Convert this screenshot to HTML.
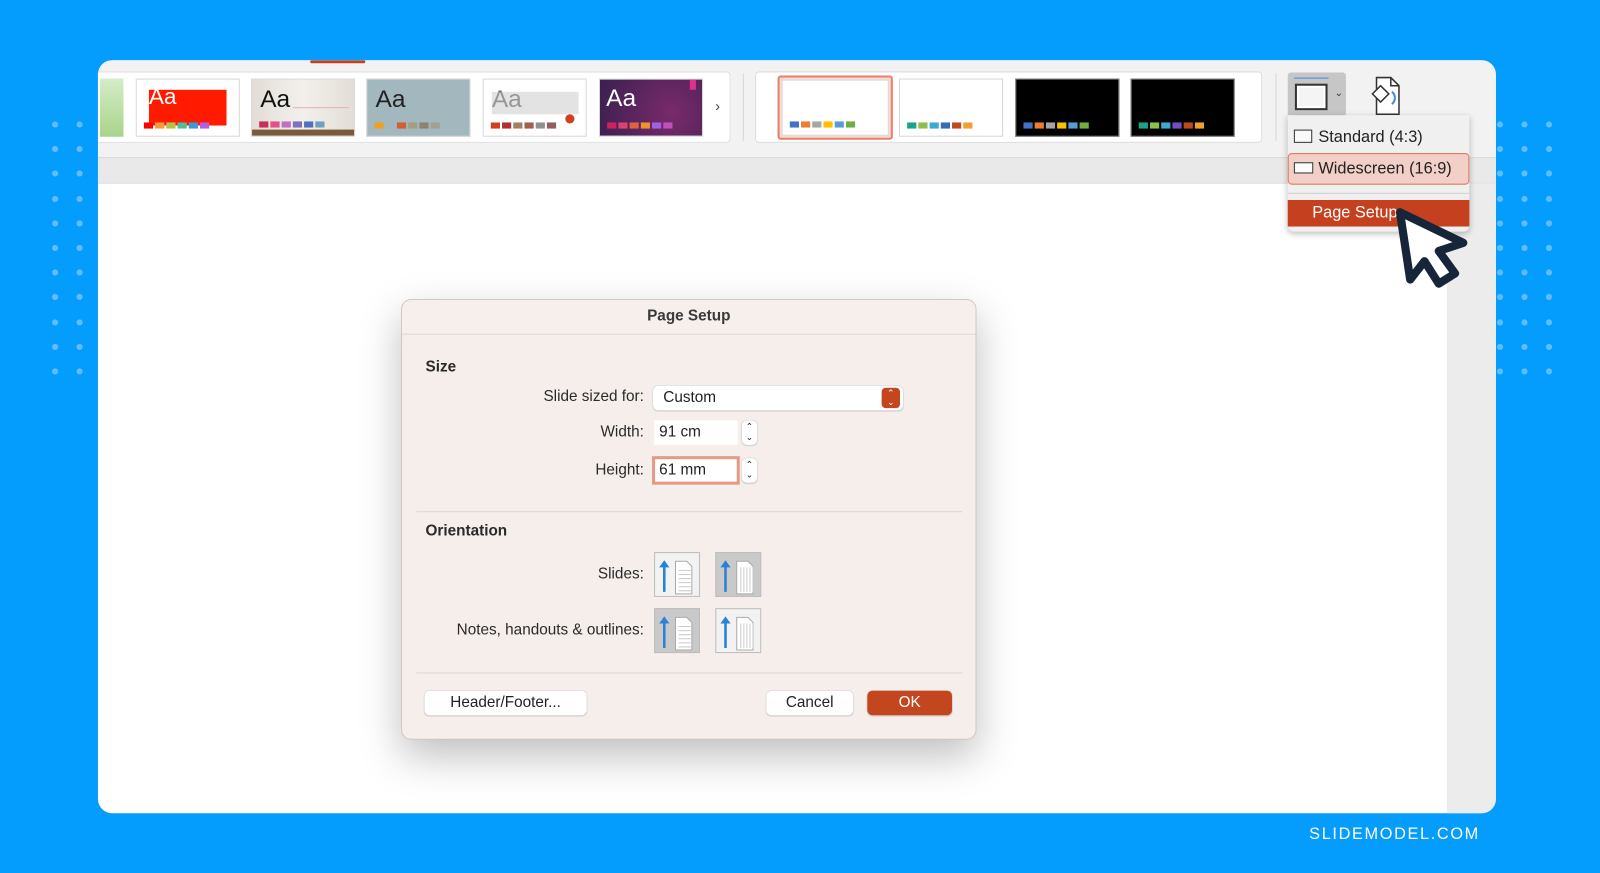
<!DOCTYPE html>
<html><head><meta charset="utf-8"><style>
*{box-sizing:border-box;margin:0;padding:0}
body{width:1600px;height:873px;overflow:hidden;background:#059dfd;font-family:"Liberation Sans",sans-serif}
#s{position:absolute;left:0;top:0;width:1568px;height:856px;transform:scale(1.0204);transform-origin:0 0}
.a{position:absolute}
.dot{position:absolute;width:6px;height:6px;border-radius:50%;background:#5fbefc}
.th{position:absolute;top:77px;width:102px;height:57px;border:1px solid #d8d8d8;background:#fff;overflow:hidden}
.sw{position:absolute;bottom:7px;left:7px;display:flex;gap:2px}
.sw i{display:block;width:9px;height:6px}
.lbl{position:absolute;font-size:15px;color:#2a2a2a;text-align:right;width:300px}
.btn{position:absolute;background:#fff;border-radius:5px;box-shadow:0 0 0 0.5px #cfcfcf,0 1px 1px rgba(0,0,0,.15);font-size:15px;color:#222;text-align:center;line-height:24px;height:24px}
.ob{position:absolute;width:45px;height:44px;border:1px solid #bdbdbd;background:#f2f2f2}
.ob.g{background:#c9c9c9}
</style></head><body><div id="s">
<div id="dots"></div>
<div class="a" style="left:96px;top:59px;width:1370px;height:738px;background:#fff;border-radius:14px;overflow:hidden">
 <div class="a" style="left:0;top:0;width:1370px;height:96px;background:#f2f2f2"></div>
 <div class="a" style="left:208px;top:0;width:54px;height:3px;background:#c4401e;border-radius:2px"></div>
 <div class="a" style="left:0;top:95px;width:1370px;height:26px;background:#e9e9e9;border-top:1px solid #dadada;border-bottom:1px solid #dedede"></div>
 <div class="a" style="left:1322px;top:121px;width:48px;height:617px;background:#ececec"></div>
</div>
<div class="a" style="left:96px;top:70px;width:620px;height:70px;background:#fff;border:1px solid #ddd;border-left:none;border-radius:0 4px 4px 0"></div>
<div class="a" style="left:98px;top:77px;width:23px;height:57px;background:linear-gradient(#d5ecc8,#a9d48a)"></div>
<div class="th" style="left:133px"><div class="a" style="left:12px;top:10px;width:76px;height:35px;background:#ff1a00"></div><div class="a" style="left:12px;top:4px;color:#fff;font-size:22px">Aa</div><div class="sw"><i style="background:#f00"></i><i style="background:#f59a3a"></i><i style="background:#b5c24a"></i><i style="background:#4cc09a"></i><i style="background:#3a9ad8"></i><i style="background:#b060e0"></i></div></div>
<div class="th" style="left:246px;background:linear-gradient(90deg,#e2ddd6,#f3f0ec,#e2ddd6)"><div class="a" style="left:8px;top:6px;color:#111;font-size:24px">Aa</div><div class="a" style="left:40px;top:27px;width:55px;height:1px;background:#e8b0b0"></div><div class="a" style="left:0;bottom:0;width:102px;height:6px;background:#7a5a3a"></div><div class="sw" style="bottom:8px"><i style="background:#c8305a"></i><i style="background:#e0508a"></i><i style="background:#c070c0"></i><i style="background:#8070c0"></i><i style="background:#5070c0"></i><i style="background:#70a0c0"></i></div></div>
<div class="th" style="left:359px;background:#a3b7bf"><div class="a" style="left:8px;top:6px;color:#222;font-size:24px">Aa</div><div class="sw"><i style="background:#f0a020"></i><i style="background:#a3b7bf"></i><i style="background:#d06030"></i><i style="background:#a0a080"></i><i style="background:#908070"></i><i style="background:#a0a090"></i></div></div>
<div class="th" style="left:473px"><div class="a" style="left:8px;top:6px;color:#666;font-size:24px">Aa</div><div class="a" style="left:8px;top:12px;width:85px;height:22px;background:rgba(200,200,200,.5)"></div><div class="a" style="left:80px;top:34px;width:9px;height:9px;border-radius:50%;background:#d04020"></div><div class="sw"><i style="background:#d04020"></i><i style="background:#b03030"></i><i style="background:#a08060"></i><i style="background:#a06050"></i><i style="background:#909090"></i><i style="background:#906060"></i></div></div>
<div class="th" style="left:587px;background:radial-gradient(circle at 70% 60%,#7a2a6a,#3a2050)"><div class="a" style="left:6px;top:5px;color:#fff;font-size:24px">Aa</div><div class="a" style="left:88px;top:0;width:6px;height:10px;background:#e0308a"></div><div class="sw"><i style="background:#d02060"></i><i style="background:#e04070"></i><i style="background:#e06040"></i><i style="background:#f09030"></i><i style="background:#a060e0"></i><i style="background:#c050c0"></i></div></div>
<div class="a" style="left:701px;top:96px;font-size:14px;color:#444">›</div>
<div class="a" style="left:728px;top:72px;width:1px;height:66px;background:#d6d6d6"></div>
<div class="a" style="left:740px;top:70px;width:497px;height:70px;background:#fff;border:1px solid #ddd;border-radius:4px"></div>
<div class="a" style="left:762px;top:74px;width:113px;height:63px;border:2px solid #e8806a;border-radius:3px;background:#f7d9d2"></div>
<div class="th" style="left:766px;top:78px;width:105px;height:55px"><div class="sw"><i style="background:#4472c4"></i><i style="background:#ed7d31"></i><i style="background:#a5a5a5"></i><i style="background:#ffc000"></i><i style="background:#5b9bd5"></i><i style="background:#70ad47"></i></div></div>
<div class="th" style="left:881px"><div class="sw"><i style="background:#1ba38a"></i><i style="background:#8cc04a"></i><i style="background:#3aaad0"></i><i style="background:#3070b0"></i><i style="background:#c04a20"></i><i style="background:#f0a030"></i></div></div>
<div class="th" style="left:995px;background:#000;border-color:#888"><div class="sw"><i style="background:#4472c4"></i><i style="background:#ed7d31"></i><i style="background:#a5a5a5"></i><i style="background:#ffc000"></i><i style="background:#5b9bd5"></i><i style="background:#70ad47"></i></div></div>
<div class="th" style="left:1108px;background:#000;border-color:#888"><div class="sw"><i style="background:#1ba38a"></i><i style="background:#8cc04a"></i><i style="background:#3aaad0"></i><i style="background:#7050c0"></i><i style="background:#c04a20"></i><i style="background:#f0a030"></i></div></div>
<div class="a" style="left:1250px;top:72px;width:1px;height:66px;background:#d6d6d6"></div>
<div class="a" style="left:1262px;top:71px;width:57px;height:42px;background:#c6c6c6;border-radius:3px 3px 0 0"></div>
<div class="a" style="left:1269px;top:82px;width:32px;height:26px;border:2px solid #333;background:#f4f4f4;box-shadow:inset 0 0 0 2px #fff"></div>
<div class="a" style="left:1268px;top:76px;width:34px;height:1px;background:#3a8ee0"></div>
<div class="a" style="left:1308px;top:86px;font-size:10px;color:#333">⌄</div>
<svg class="a" style="left:1340px;top:74px" width="36" height="40" viewBox="0 0 36 40"><path d="M9 2h14l8 8v28H9z" fill="#fff" stroke="#333" stroke-width="1.5"/><path d="M23 2v8h8" fill="none" stroke="#333" stroke-width="1.5"/><path d="M5 18l8-8 8 8-8 8z" fill="#fff" stroke="#333" stroke-width="1.5"/><path d="M24 16c4 3 4 9 0 12" fill="none" stroke="#3a8ee0" stroke-width="2"/></svg>
<div class="a" style="left:1262px;top:113px;width:178px;height:114px;background:#f0f0f0;border-radius:0 0 6px 6px;box-shadow:0 2px 6px rgba(0,0,0,.25)"></div>
<div class="a" style="left:1268px;top:127px;width:18px;height:13px;border:1px solid #333;background:#fafafa"></div>
<div class="a" style="left:1292px;top:126px;font-size:16px;color:#222">Standard (4:3)</div>
<div class="a" style="left:1262px;top:150px;width:178px;height:31px;background:#f2cfc7;border:1px solid #e07a60;border-radius:4px"></div>
<div class="a" style="left:1268px;top:159px;width:19px;height:11px;border:1px solid #333;background:#fafafa"></div>
<div class="a" style="left:1292px;top:157px;font-size:16px;color:#222">Widescreen (16:9)</div>
<div class="a" style="left:1262px;top:189px;width:178px;height:1px;background:#d0d0d0"></div>
<div class="a" style="left:1262px;top:196px;width:178px;height:26px;background:#c4401e"></div>
<div class="a" style="left:1286px;top:200px;font-size:16px;color:#fff">Page Setup</div>
<svg class="a" style="left:1360px;top:198px" width="90" height="90" viewBox="0 0 90 90"><path d="M12 10 L74 40 L50 48 L66 70 L50 80 L36 58 L22 76 Z" fill="#fff" stroke="#17253a" stroke-width="8" stroke-linejoin="round"/></svg>
<div class="a" style="left:393px;top:293px;width:564px;height:432px;background:#f5eeeb;border-radius:10px;border:1px solid #d0c8c4;box-shadow:0 16px 40px rgba(0,0,0,.25)">
 <div class="a" style="left:0;top:0;width:562px;height:34px;background:#f7efec;border-bottom:1px solid #dcd4d0;border-radius:10px 10px 0 0;text-align:center;font-weight:bold;font-size:15px;line-height:32px;color:#3a3a3a">Page Setup</div>
</div>
<div class="a" style="left:417px;top:351px;font-weight:bold;font-size:15px;color:#2a2a2a">Size</div>
<div class="lbl" style="left:331px;top:380px">Slide sized for:</div>
<div class="btn" style="left:640px;top:378px;width:245px;text-align:left;padding-left:10px">Custom</div>
<div class="a" style="left:864px;top:380px;width:18px;height:20px;background:#c4461f;border-radius:4px;color:#fff;font-size:9px;text-align:center;line-height:9px;padding-top:1px">⌃<br>⌄</div>
<div class="lbl" style="left:331px;top:415px">Width:</div>
<div class="a" style="left:641px;top:412px;width:82px;height:24px;background:#fff;font-size:15px;line-height:24px;padding-left:5px;color:#222">91 cm</div>
<div class="btn" style="left:727px;top:412px;width:15px;height:24px;font-size:9px;line-height:10px;padding-top:1px">⌃<br>⌄</div>
<div class="lbl" style="left:331px;top:452px">Height:</div>
<div class="a" style="left:639px;top:447px;width:86px;height:28px;background:#fff;border:3px solid #e49a86;font-size:15px;line-height:22px;padding-left:4px;color:#222">61 mm</div>
<div class="btn" style="left:727px;top:449px;width:15px;height:24px;font-size:9px;line-height:10px;padding-top:1px">⌃<br>⌄</div>
<div class="a" style="left:408px;top:501px;width:535px;height:1px;background:#dcd4d0"></div>
<div class="a" style="left:417px;top:512px;font-weight:bold;font-size:15px;color:#2a2a2a">Orientation</div>
<div class="lbl" style="left:331px;top:554px">Slides:</div>
<div class="lbl" style="left:331px;top:609px">Notes, handouts &amp; outlines:</div>
<div id="obs"></div>
<div class="a" style="left:408px;top:659px;width:535px;height:1px;background:#dcd4d0"></div>
<div class="btn" style="left:416px;top:677px;width:159px">Header/Footer...</div>
<div class="btn" style="left:751px;top:677px;width:85px">Cancel</div>
<div class="btn" style="left:850px;top:677px;width:83px;background:#c4461f;color:#fff">OK</div>
<div class="a" style="left:1283px;top:809px;font-size:16px;color:#fff;letter-spacing:1.6px">SLIDEMODEL.COM</div>
</div>
<script>
var d=document.getElementById('dots'),h='';
for(var r=0;r<11;r++){var y=119+r*24.2;[51,75,1467,1491,1515].forEach(function(x){h+='<div class="dot" style="left:'+x+'px;top:'+y+'px"></div>'})}
d.innerHTML=h;
var o='',pos=[[641,541,0,0],[701,541,1,1],[641,596,1,0],[701,596,0,1]];
pos.forEach(function(p){
 var lines='';
 if(!p[3]){for(var i=0;i<6;i++)lines+='<path d="M23 '+(17+i*4)+'h12" stroke="#ccc"/>'}else{for(var i=0;i<5;i++)lines+='<path d="M'+(24+i*3)+' 14v24" stroke="#ccc"/>'}
 o+='<div class="ob'+(p[2]?' g':'')+'" style="left:'+p[0]+'px;top:'+p[1]+'px"><svg width="43" height="42"><path d="M9 38V10" stroke="#2a82d8" stroke-width="2.5"/><path d="M4 14l5-7 5 7z" fill="#2a82d8"/><path d="M20 8h11l5 5v27H20z" fill="#fff" stroke="#aaa"/>'+lines+'</svg></div>';
});
document.getElementById('obs').innerHTML=o;
</script>
</body></html>
